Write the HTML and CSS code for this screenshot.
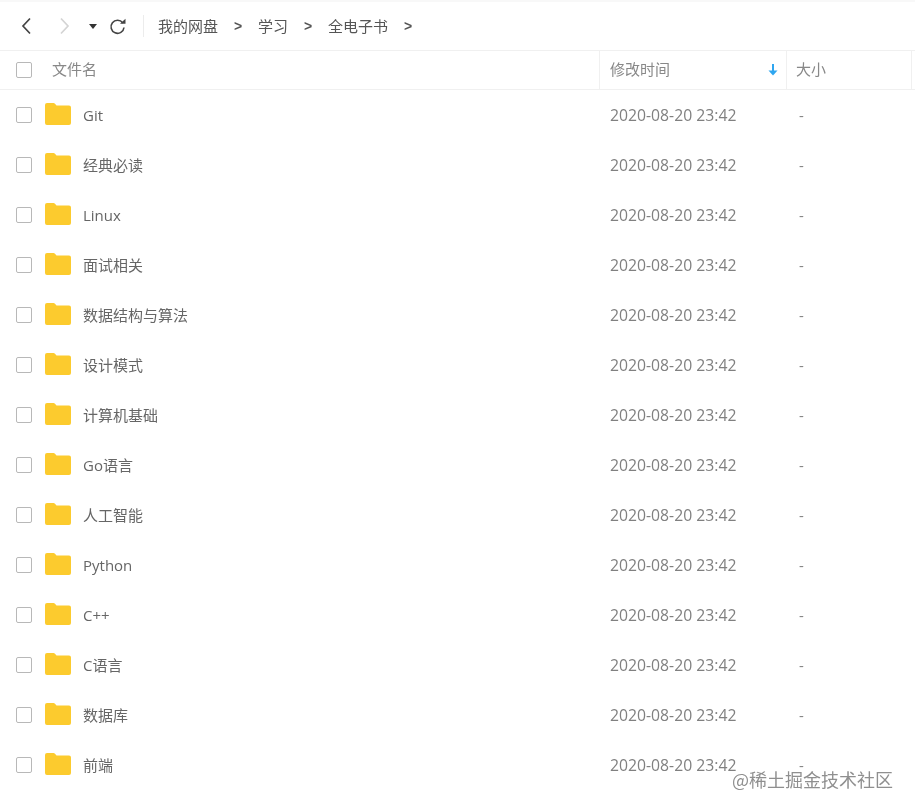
FILE: index.html
```html
<!DOCTYPE html>
<html lang="en">
<head>
    <meta charset="UTF-8">
    <title>我的网盘</title>
    <link rel="stylesheet" href="styles.css">
</head>
<body>
    <svg class="defs" width="0" height="0">
        <symbol id="folder" viewBox="0 0 26 22">
            <path d="M0 2a2 2 0 0 1 2-2h6.500a2 2 0 0 1 1.500.7L11.500 2.500H24a2 2 0 0 1 2 2V20a2 2 0 0 1-2 2H2a2 2 0 0 1-2-2z" fill="#fccb2e"/>
        </symbol>
    </svg>

    <div class="page">
        <div class="toolbar">
            <div class="nav">
                <svg class="back" width="12" height="18" viewBox="0 0 12 18"><path d="M10 1.500 3 9l7 7.500" fill="none" stroke="#444" stroke-width="1.700"/></svg>
                <svg class="forward" width="12" height="18" viewBox="0 0 12 18"><path d="M2 1.500 9 9l-7 7.500" fill="none" stroke="#d4d4d4" stroke-width="1.700"/></svg>
                <svg class="drop" width="8" height="5" viewBox="0 0 8 5"><path d="M0 0h8L4 5z" fill="#333"/></svg>
                <svg class="refresh" width="17" height="17" viewBox="0 0 17 17"><path d="M13.800 5A6.500 6.500 0 1 0 15 9.500" fill="none" stroke="#444" stroke-width="1.600"/><path d="M11 5.800h5.500V.8z" fill="#444"/></svg>
            </div>
            <div class="crumbs">
                <span>我的网盘</span><span class="sep">&gt;</span>
                <span>学习</span><span class="sep">&gt;</span>
                <span>全电子书</span><span class="sep">&gt;</span>
            </div>
        </div>

        <div class="head">
            <div class="col-name"><span class="check"></span><span class="head-label">文件名</span></div>
            <div class="col-time">
                <span>修改时间</span>
                <svg width="10" height="12" viewBox="0 0 10 12"><path d="M5 0v8" stroke="#2ea6f0" stroke-width="2"/><path d="M0.500 6.500h9L5 11.500z" fill="#2ea6f0"/></svg>
            </div>
            <div class="col-size">大小</div>
            <div class="col-end"></div>
        </div>

        <div class="list">
            <div class="row"><span class="check"></span><svg class="folder"><use href="#folder"/></svg><span class="name">Git</span><span class="time">2020-08-20 23:42</span><span class="size">-</span></div>
            <div class="row"><span class="check"></span><svg class="folder"><use href="#folder"/></svg><span class="name">经典必读</span><span class="time">2020-08-20 23:42</span><span class="size">-</span></div>
            <div class="row"><span class="check"></span><svg class="folder"><use href="#folder"/></svg><span class="name">Linux</span><span class="time">2020-08-20 23:42</span><span class="size">-</span></div>
            <div class="row"><span class="check"></span><svg class="folder"><use href="#folder"/></svg><span class="name">面试相关</span><span class="time">2020-08-20 23:42</span><span class="size">-</span></div>
            <div class="row"><span class="check"></span><svg class="folder"><use href="#folder"/></svg><span class="name">数据结构与算法</span><span class="time">2020-08-20 23:42</span><span class="size">-</span></div>
            <div class="row"><span class="check"></span><svg class="folder"><use href="#folder"/></svg><span class="name">设计模式</span><span class="time">2020-08-20 23:42</span><span class="size">-</span></div>
            <div class="row"><span class="check"></span><svg class="folder"><use href="#folder"/></svg><span class="name">计算机基础</span><span class="time">2020-08-20 23:42</span><span class="size">-</span></div>
            <div class="row"><span class="check"></span><svg class="folder"><use href="#folder"/></svg><span class="name">Go语言</span><span class="time">2020-08-20 23:42</span><span class="size">-</span></div>
            <div class="row"><span class="check"></span><svg class="folder"><use href="#folder"/></svg><span class="name">人工智能</span><span class="time">2020-08-20 23:42</span><span class="size">-</span></div>
            <div class="row"><span class="check"></span><svg class="folder"><use href="#folder"/></svg><span class="name">Python</span><span class="time">2020-08-20 23:42</span><span class="size">-</span></div>
            <div class="row"><span class="check"></span><svg class="folder"><use href="#folder"/></svg><span class="name">C++</span><span class="time">2020-08-20 23:42</span><span class="size">-</span></div>
            <div class="row"><span class="check"></span><svg class="folder"><use href="#folder"/></svg><span class="name">C语言</span><span class="time">2020-08-20 23:42</span><span class="size">-</span></div>
            <div class="row"><span class="check"></span><svg class="folder"><use href="#folder"/></svg><span class="name">数据库</span><span class="time">2020-08-20 23:42</span><span class="size">-</span></div>
            <div class="row"><span class="check"></span><svg class="folder"><use href="#folder"/></svg><span class="name">前端</span><span class="time">2020-08-20 23:42</span><span class="size">-</span></div>
        </div>

        <div class="watermark">@稀土掘金技术社区</div>
    </div>
</body>
</html>
```

FILE: styles.css
```css
html, body {
    height: 100%;
}
body {
    margin: 0;
    overflow: hidden;
    background-color: #fff;
}
.page {
    position: relative;
    height: 100%;
    box-sizing: border-box;
    border-top: 2px solid #f8f8f8;
    color: #666;
    font-family: "Open Sans", "Noto Sans CJK SC", sans-serif;
    font-size: 15px;
    line-height: 20px;
    filter: blur(0.35px);
}
.defs {
    position: absolute;
}
.toolbar {
    display: flex;
    align-items: center;
    height: 48px;
    border-bottom: 1px solid #f0f0f0;
}
.nav {
    display: flex;
    align-items: center;
    width: 144px;
    height: 22px;
    padding-left: 20px;
    box-sizing: border-box;
    border-right: 1px solid #ececec;
}
.nav .forward {
    margin-left: 27px;
}
.nav .drop {
    margin-left: 18px;
}
.nav .refresh {
    margin-left: 12px;
}
.crumbs {
    display: flex;
    align-items: center;
    padding: 0 0 1px 14px;
    color: #555;
}
.crumbs .sep {
    width: 40px;
    text-align: center;
    font-family: "Liberation Sans", sans-serif;
    font-weight: bold;
    font-size: 14px;
}
.head {
    display: flex;
    height: 38px;
    border-bottom: 1px solid #f0f0f0;
    color: #888;
}
.head > div {
    display: flex;
    align-items: center;
    box-sizing: border-box;
}
.head span:not(.check), .col-size {
    padding-bottom: 2px;
}
.col-name {
    width: 600px;
    padding-left: 16px;
    border-right: 1px solid #f0f0f0;
}
.head-label {
    margin-left: 20px;
}
.col-time {
    width: 187px;
    padding: 0 8px 0 10px;
    justify-content: space-between;
    border-right: 1px solid #f0f0f0;
}
.col-size {
    width: 125px;
    padding-left: 9px;
    border-right: 1px solid #f0f0f0;
}
.col-end {
    flex: 1;
}
.check {
    flex: none;
    width: 16px;
    height: 16px;
    box-sizing: border-box;
    border: 1px solid #b8b8b8;
    border-radius: 2px;
}
.row {
    display: flex;
    align-items: center;
    height: 50px;
    padding-left: 16px;
}
.folder {
    flex: none;
    width: 26px;
    height: 22px;
    margin: -2px 0 0 13px;
}
.name {
    width: 527px;
    margin-left: 12px;
    color: #666;
}
.time {
    width: 189px;
    font-size: 15.75px;
    color: #808080;
}
.size {
    color: #808080;
}
.watermark {
    position: absolute;
    left: 732px;
    top: 764px;
    font-size: 18px;
    line-height: 26px;
    color: #8f8f8f;
    font-family: "Noto Sans CJK SC", sans-serif;
    white-space: nowrap;
}
```
